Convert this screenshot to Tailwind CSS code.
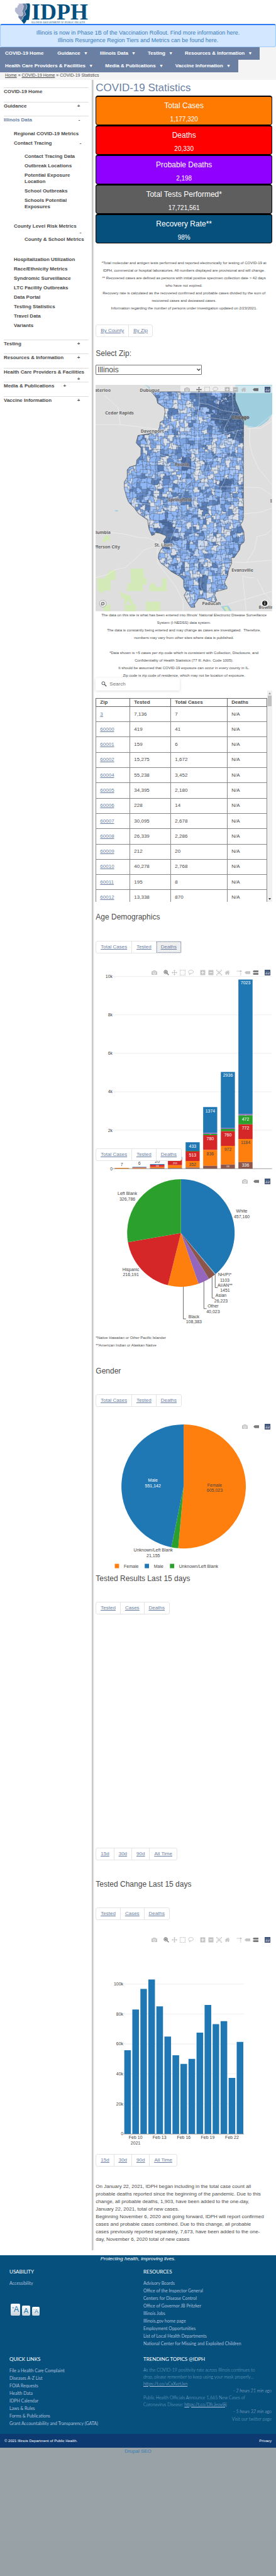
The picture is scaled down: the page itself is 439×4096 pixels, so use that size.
<!DOCTYPE html>
<html lang="en">
<head>
<meta charset="utf-8">
<meta name="viewport" content="width=device-width, initial-scale=1">
<title>COVID-19 Statistics | IDPH</title>
<script src="https://cdn.jsdelivr.net/npm/@tailwindcss/browser@4"></script>
</head>
<body class="min-h-screen flex flex-col bg-linear-to-b from-[#a5abad] to-[#97a1a6] font-['Liberation_Sans',Arial,sans-serif] text-[8px] leading-[12px] text-[#4a4a4a]">

<!-- Shared icons -->
<svg class="hidden" aria-hidden="true">
  <symbol id="camera" viewBox="0 0 1000 1000"><path transform="matrix(1 0 0 -1 0 850)" d="m500 450c-83 0-150-67-150-150 0-83 67-150 150-150 83 0 150 67 150 150 0 83-67 150-150 150z m400 150h-120c-16 0-34 13-39 29l-31 93c-6 15-23 28-40 28h-340c-16 0-34-13-39-28l-31-94c-6-15-23-28-40-28h-120c-55 0-100-45-100-100v-450c0-55 45-100 100-100h800c55 0 100 45 100 100v450c0 55-45 100-100 100z m-400-550c-138 0-250 112-250 250 0 138 112 250 250 250 138 0 250-112 250-250 0-138-112-250-250-250z m365 380c-19 0-35 16-35 35 0 19 16 35 35 35 19 0 35-16 35-35 0-19-16-35-35-35z"/></symbol>
  <symbol id="zoom" viewBox="0 0 24 24"><path fill-rule="evenodd" d="M9.500 1a8.500 8.500 0 1 0 4.800 15.500l6.700 6.500 2.500-2.500-6.600-6.500A8.500 8.500 0 0 0 9.500 1zm0 2.800a5.800 5.800 0 1 1 0 11.600 5.800 5.800 0 0 1 0-11.600zM5.500 6.500v6h8v-6z"/></symbol>
  <symbol id="pan" viewBox="0 0 1000 1000"><path transform="matrix(1 0 0 -1 0 850)" d="m1000 350l-187 188 0-125-250 0 0 250 125 0-188 187-187-187 125 0 0-250-250 0 0 125-188-188 186-187 0 125 252 0 0-250-125 0 187-188 188 188-125 0 0 250 250 0 0-126 187 188z"/></symbol>
  <symbol id="box" viewBox="0 0 24 24"><path d="M0 0h4v4H0zM6.500 0h4v3h-4zM13.500 0h4v3h-4zM20 0h4v4h-4zM0 6.500h3v4H0zM0 13.500h3v4H0zM21 6.500h3v4h-3zM21 13.500h3v4h-3zM0 20h4v4H0zM6.500 21h4v3h-4zM13.500 21h4v3h-4zM20 20h4v4h-4z"/></symbol>
  <symbol id="lasso" viewBox="0 0 24 24"><path fill="none" stroke="currentColor" stroke-width="2.600" d="M5 14.500C1.500 12 .8 7.500 4 4.500 8 1 17 .8 21 4.500c3.500 3.500 1.500 9-4 10.800-4 1.300-8 1-10-.3-2 1-2.500 4 0 4.200 2.500 0 3-3.200.5-3.700M7.500 19c0 2 -1 3-2.500 4"/></symbol>
  <symbol id="plus" viewBox="0 0 875 1000"><path transform="matrix(1 0 0 -1 0 850)" d="m1 787l0-875 875 0 0 875-875 0z m687-500l-187 0 0-187-125 0 0 187-188 0 0 125 188 0 0 187 125 0 0-187 187 0 0-125z"/></symbol>
  <symbol id="minus" viewBox="0 0 875 1000"><path transform="matrix(1 0 0 -1 0 850)" d="m0 788l0-876 875 0 0 876-875 0z m688-500l-500 0 0 125 500 0 0-125z"/></symbol>
  <symbol id="auto" viewBox="0 0 24 24"><path d="M0 0h6v2H2v4H0zM18 0h6v6h-2V2h-4zM0 18h2v4h4v2H0zM22 18h2v6h-6v-2h4zM4.500 4.500h6L8.600 6.400 12 9.800l3.400-3.400-1.900-1.900h6v6l-1.900-1.900L14.200 12l3.400 3.400 1.900-1.900v6h-6l1.900-1.900L12 14.200l-3.400 3.400 1.900 1.900h-6v-6l1.900 1.900L9.800 12 6.400 8.600l-1.900 1.900z"/></symbol>
  <symbol id="home" viewBox="0 0 929 1000"><path transform="matrix(1 0 0 -1 0 850)" d="m786 296v-267q0-15-11-26t-25-10h-214v214h-143v-214h-214q-15 0-25 10t-11 26v267q0 1 0 2t0 2l321 264 321-264q1-1 1-4z m124 39l-34-41q-5-5-12-6h-2q-7 0-12 3l-386 322-386-322q-7-4-13-4-7 2-12 7l-35 41q-4 5-3 13t6 12l401 334q18 15 42 15t43-15l136-114v109q0 8 5 13t13 5h107q8 0 13-5t5-13v-227l122-102q5-5 6-12t-4-13z"/></symbol>
  <symbol id="spike" viewBox="0 0 24 24"><path d="M2 4h4v3H2zM8 4h4v3H8zM16.500 13h3v4h-3zM16.500 19h3v4h-3z"/><circle cx="18" cy="6" r="4"/></symbol>
  <symbol id="tag" viewBox="0 0 1500 1000"><path transform="matrix(1 0 0 -1 0 850)" d="m375 725l0 0-375-375 375-374 0-1 1125 0 0 750-1125 0z"/></symbol>
  <symbol id="tags" viewBox="0 0 1125 1000"><path transform="matrix(1 0 0 -1 0 850)" d="m187 786l0 2-187-188 188-187 0 0 937 0 0 373-938 0z m0-499l0 1-187-188 188-188 0 0 937 0 0 376-938-1z"/></symbol>
  <symbol id="plotly" viewBox="0 0 24 24"><rect width="24" height="24" fill="#3f4f75"/><g fill="#80cfbe"><circle cx="5" cy="5" r="1.300"/><circle cx="9.500" cy="5" r="1.300"/><circle cx="14.500" cy="5" r="1.300"/><circle cx="19" cy="5" r="1.300"/><circle cx="5" cy="9.500" r="1.300"/><circle cx="14.500" cy="9.500" r="1.300"/></g><path fill="#fff" d="M4 13h2v7H4zM8.500 9h2v11h-2zM13.500 13h2v7h-2zM18 9h2v11h-2z"/></symbol>
</svg>

<div class="bg-white">
<header>
  <a href="#" aria-label="IDPH home" class="block h-[38px] pl-[23px] pt-[5px]">
    <svg class="h-[33px] w-[120px] overflow-visible" viewBox="0 0 120 33">
      <path fill="#06507d" d="M13 .5h11l.8 3-.6 14-1.200 9-4 0.500-1 3-3 3-4.500-6-3-4z"/>
      <path fill="#6c7fa3" stroke="#fff" stroke-width=".6" d="M10 .500h8l2 4-1 5-3 3 2 6-4 3-1 4-3 2-4-5 .5-6z"/>
      <path fill="#b5b9d2" stroke="#fff" stroke-width=".5" d="M6 .5h6l2.500 4-1 5-1.500 3 1.500 4-1 3.500-4 .5-5-3.500-3-4.500 .5-5 3.500-1 .5-3 2-1z"/>
      <text x="27" y="26" font-family="Liberation Serif" font-weight="bold" font-size="36" fill="#06507d">IDPH</text>
      <text x="27" y="32" font-family="Liberation Serif" font-size="5" fill="#06507d">I<tspan font-size="4">LLINOIS</tspan> D<tspan font-size="4">EPARTMENT OF</tspan> P<tspan font-size="4">UBLIC</tspan> H<tspan font-size="4">EALTH</tspan></text>
    </svg>
  </a>
  <div class="h-[37px] rounded-[3px] border border-[#9fcbfb] border-t-2 border-t-[#2b7bf5] bg-[#d3e7ff] pt-[6px] text-center text-[9px] text-[#3a7cb8]">
    <a href="#" class="block">Illinois is now in Phase 1B of the Vaccination Rollout. Find more information here.</a>
    <a href="#" class="block">Illinois Resurgence Region Tiers and Metrics can be found here.</a>
  </div>
  <div class="bg-[#f4f4f4]">
    <nav class="font-bold text-white">
      <ul class="flex h-[20px] w-fit items-center bg-[#6b7fa3] pl-[8px]">
        <li class="pr-[22px]"><a href="#">COVID-19 Home</a></li>
        <li class="pr-[19px]"><a href="#">Guidance <span class="ml-[3px] text-[7px]">▼</span></a></li>
        <li class="pr-[19px]"><a href="#">Illinois Data <span class="ml-[3px] text-[7px]">▼</span></a></li>
        <li class="pr-[19px]"><a href="#">Testing <span class="ml-[3px] text-[7px]">▼</span></a></li>
        <li class="pr-[12px]"><a href="#">Resources &amp; Information <span class="ml-[3px] text-[7px]">▼</span></a></li>
      </ul>
      <ul class="flex h-[20px] w-fit items-center bg-[#6b7fa3] pl-[8px]">
        <li class="pr-[19px]"><a href="#">Health Care Providers &amp; Facilities <span class="ml-[3px] text-[7px]">▼</span></a></li>
        <li class="pr-[19px]"><a href="#">Media &amp; Publications <span class="ml-[3px] text-[7px]">▼</span></a></li>
        <li class="pr-[12px]"><a href="#">Vaccine Information <span class="ml-[3px] text-[7px]">▼</span></a></li>
      </ul>
    </nav>
    <p class="h-[12px] pl-[8px] text-[7px] leading-[9px]"><a href="#" class="underline">Home</a> » <a href="#" class="underline">COVID-19 Home</a> » COVID-19 Statistics</p>
  </div>
</header>

<div class="flex">
  <aside class="w-1/3 shrink-0 pt-[12px] pr-[5px] pl-[6px] font-bold whitespace-nowrap">
    <ul>
      <li class="h-[23px] border-t border-[#ddd]"><a href="#">COVID-19 Home</a></li>
      <li class="flex h-[22px] justify-between border-t border-[#ddd] pr-[14px]"><a href="#">Guidance</a><button class="self-start font-bold" aria-label="Expand Guidance">+</button></li>
      <li class="border-t border-[#ddd]">
        <div class="flex justify-between pr-[14px]"><a href="#" class="text-[#6b7fa3]">Illinois Data</a><button class="font-bold" aria-label="Collapse Illinois Data">-</button></div>
        <ul class="mt-[11px] pl-[16px] leading-[10px]">
          <li class="mb-[5px]"><a href="#">Regional COVID-19 Metrics</a></li>
          <li>
            <div class="flex justify-between pr-[12px]"><a href="#">Contact Tracing</a><button class="font-bold" aria-label="Collapse Contact Tracing">-</button></div>
            <ul class="mt-[11px] flex flex-col gap-[5px] pl-[17px]">
              <li><a href="#">Contact Tracing Data</a></li>
              <li><a href="#">Outbreak Locations</a></li>
              <li><a href="#">Potential Exposure<br>Location</a></li>
              <li><a href="#">School Outbreaks</a></li>
              <li><a href="#">Schools Potential<br>Exposures</a></li>
            </ul>
          </li>
          <li class="mt-[21px]">
            <a href="#" class="block">County Level Risk Metrics</a>
            <div class="flex justify-end pr-[12px]"><button class="font-bold" aria-label="Collapse County Level Risk Metrics">-</button></div>
            <ul class="mt-[1px] pl-[17px]"><li><a href="#">County &amp; School Metrics</a></li></ul>
          </li>
          <li class="mt-[22px] mb-[17px]">
            <ul class="flex flex-col gap-[5px]">
              <li><a href="#">Hospitalization Utilization</a></li>
              <li><a href="#">Race/Ethnicity Metrics</a></li>
              <li><a href="#">Syndromic Surveillance</a></li>
              <li><a href="#">LTC Facility Outbreaks</a></li>
              <li><a href="#">Data Portal</a></li>
              <li><a href="#">Testing Statistics</a></li>
              <li><a href="#">Travel Data</a></li>
              <li><a href="#">Variants</a></li>
            </ul>
          </li>
        </ul>
      </li>
      <li class="flex h-[22px] justify-between border-t border-[#ddd] pr-[14px]"><a href="#">Testing</a><button class="self-start font-bold" aria-label="Expand Testing">+</button></li>
      <li class="flex h-[23px] justify-between border-t border-[#ddd] pr-[14px]"><a href="#">Resources &amp; Information</a><button class="self-start font-bold" aria-label="Expand Resources">+</button></li>
      <li class="h-[22px] border-t border-[#ddd]"><a href="#" class="block">Health Care Providers &amp; Facilities</a><div class="flex justify-end pr-[14px] leading-[10px]"><button class="font-bold" aria-label="Expand Health Care Providers">+</button></div></li>
      <li class="flex h-[23px] gap-[14px] border-t border-[#ddd]"><a href="#">Media &amp; Publications</a><button class="self-start font-bold" aria-label="Expand Media">+</button></li>
      <li class="flex h-[22px] justify-between border-t border-[#ddd] pr-[14px]"><a href="#">Vaccine Information</a><button class="self-start font-bold" aria-label="Expand Vaccine Information">+</button></li>
    </ul>
  </aside>
  <div class="w-[4px] shrink-0 bg-linear-to-r from-[#b5b5b5] to-white"></div>

  <main class="min-w-0 flex-1 pr-[6px] pb-[11px] pl-[2px]">
    <h1 class="mb-[2px] pt-[3px] text-[17px] leading-[20px] text-[#6b7fa3]">COVID-19 Statistics</h1>

    <section class="text-center text-white">
      <div class="rounded-[4px] border border-t-2 border-black bg-[#ff7a00] pt-[7px] pb-[2px]"><h3 class="text-[12px] leading-[15px]">Total Cases</h3><p class="mt-[7px] text-[10px] leading-[13px]">1,177,320</p></div>
      <div class="rounded-[4px] border border-t-2 border-black bg-[#ff0000] pt-[7px] pb-[2px]"><h3 class="text-[12px] leading-[15px]">Deaths</h3><p class="mt-[7px] text-[10px] leading-[13px]">20,330</p></div>
      <div class="rounded-[4px] border border-t-2 border-black bg-[#9000ff] pt-[7px] pb-[2px]"><h3 class="text-[12px] leading-[15px]">Probable Deaths</h3><p class="mt-[7px] text-[10px] leading-[13px]">2,198</p></div>
      <div class="rounded-[4px] border border-t-2 border-black bg-[#5e5e5e] pt-[7px] pb-[2px]"><h3 class="text-[12px] leading-[15px]">Total Tests Performed*</h3><p class="mt-[7px] text-[10px] leading-[13px]">17,721,561</p></div>
      <div class="rounded-[4px] border border-t-2 border-black bg-[#06507d] pt-[7px] pb-[2px]"><h3 class="text-[12px] leading-[15px]">Recovery Rate**</h3><p class="mt-[7px] text-[10px] leading-[13px]">98%</p></div>
    </section>

    <p class="mt-[25px] text-center text-[6px]">*Total molecular and antigen tests performed and reported electronically for testing of COVID-19 at<br>IDPH, commercial or hospital laboratories. All numbers displayed are provisional and will change.<br>** Recovered cases are defined as persons with initial positive specimen collection date &gt; 42 days<br>who have not expired.<br>Recovery rate is calculated as the recovered confirmed and probable cases divided by the sum of<br>recovered cases and deceased cases.<br>Information regarding the number of persons under investigation updated on 2/23/2021.</p>

    <div class="mt-[20px] flex w-fit divide-x divide-[#e4e4e4] rounded-[3px] border border-[#e4e4e4] leading-[10px] text-[#6b7fa3] underline">
      <a href="#" class="px-[7px] py-[4px]">By County</a><a href="#" class="px-[7px] py-[4px]">By Zip</a>
    </div>

    <label for="zip" class="mt-[18px] block text-[12px] leading-[16px]">Select Zip:</label>
    <div class="relative mt-[10px] w-3/5">
      <select id="zip" class="block h-[16px] w-full appearance-none rounded-[1px] border border-[#777] bg-white pl-[2px] text-[12px] leading-[14px]"><option>Illinois</option></select>
      <svg class="pointer-events-none absolute top-[6px] right-[2px] h-[4px] w-[6px]" viewBox="0 0 6 4"><path d="M.5.500 3 3 5.500.500" fill="none" stroke="#333" stroke-width="1.200"/></svg>
    </div>

    <!-- Choropleth of ZIP codes -->
    <div class="relative mt-[16px]">
      <svg class="block w-full" viewBox="0 0 280 359" role="img" aria-label="Illinois cases by ZIP">
        <defs>
          <path id="state" d="M530 163 548 178 575 205 583 235 610 248 638 262 645 290 638 320 635 342 605 355 600 385 590 405 545 425 500 430 440 437 420 440 404 487 445 520 443 568 410 595 405 628 350 640 330 658 330 705 306 735 306 775 325 830 343 865 390 900 420 933 500 977 512 1035 535 1075 558 1068 560 1055 600 1060 650 1075 655 1085 632 1110 640 1120 635 1135 610 1165 590 1195 588 1218 610 1250 655 1275 700 1305 770 1335 800 1358 800 1400 822 1430 803 1455 830 1495 860 1530 893 1530 890 1512 925 1475 960 1475 1020 1492 1060 1500 1075 1485 1058 1455 1065 1432 1160 1412 1160 1400 1145 1385 1140 1370 1165 1330 1175 1290 1188 1270 1200 1248 1195 1215 1220 1215 1265 1165 1272 1135 1300 1118 1305 1105 1300 1050 1272 1005 1290 985 1297 960 1297 350 1285 320 1265 285 1228 215 1228 162z"/>
          <clipPath id="il"><use href="#state" transform="scale(.1908 .25) translate(-67 -119)"/></clipPath>
        </defs>
        <rect width="280" height="359" fill="#dedede"/>
        <g transform="scale(.1908 .25) translate(-67 -119)">
          <path fill="#9fcede" d="M1228 119 1225 210 1262 280 1290 330 1300 370 1325 378 1330 386 1380 390 1440 378 1500 345 1540 300V119zM472 119l30 12 12 22 6 0-4-20-22-10zM222 917l20-4 18 4-18 6zM1110 1525l60-5 30 34h-60z"/>
          <path fill="#d4e9b8" d="M80 1346h60l45-50h48v60h-42v68h-50l-25 18-30-20zM355 1285h112v60h25v40h-30v42H325l12-50h28zM515 1390l30-18 30 30h45v-56h38v82H515zM120 1115l30-45 35 10 2 35-25-15-20 20zM265 1425l40 20 50 10 20 40 20 30-30-5-25-30-40 30 10-35-30-20zM485 1495h120v60H485zM310 1515h95v40h-95zM110 1512h80v43h-50zM1130 1530l30-4 20 28h-25z"/>
          <g fill="none" stroke="#fff" stroke-opacity=".75" stroke-width="2.500">
            <path d="M140 185 200 225 255 265 272 371M67 371h205l110 10 130 12 90 10M190 1056l120 10 110 20 90 5 130 50M67 1342l100-20 60-30 90-15 90-60 60-50 120-30M585 1100l-5 60 5 90 70 70 80 80 60 90v64M1300 768l140 4 100 50M1300 937l140-10 100-28M1350 395l-3 80 20 80 60 100 112 100M1200 1243l100 3 240-15M1290 1330l10 80 20 145M1320 1478l220-50M1320 1475l-150 35M1540 1030l-60 40-70 10-20 80-70 90M1330 395l110 0 100-50M1320 380l80 10 140-85M1410 1350l60 90 70 60M1290 1330l50 12h45"/>
          </g>
        </g>
        <g id="zips" clip-path="url(#il)" stroke="#46566f" stroke-width=".35" stroke-linejoin="round"></g>
        <g transform="scale(.1908 .25) translate(-67 -119)" fill="none">
          <use href="#state" stroke="#444" stroke-width="3"/>
          <path stroke="#fff" stroke-opacity=".7" stroke-width="2.500" d="M930 119v115l-15 90 5 360-100 70-50 110v110l-40 60-40 70M925 234l80 8 120 40 130 15 40 60M640 380l60-25 160-20 80-15 230 22M600 435l160 10 180 8 130-3 130-35 97-12M600 390v170l90 20 110 55 90 10 35 40 50 15 60 45 60 20h200M1200 119l12 170-72 100-10 120-60 50-60 50-30 60-60 20M1250 400l-50 110-20 80-40 140-30 40-8 150-50 110-60 60-60 40 5 110 10 60-5 100 60 105M700 1140l180 50 70 30 250 22M760 1105l180-60 180-50 120-45 57-12M340 863l200 15 90-5 140-15 160-30 100-60"/>
        </g>
        <g font-family="Noto Sans, Open Sans, sans-serif" font-weight="700" font-size="7" fill="#666" stroke="#e8e8e8" stroke-opacity=".8" stroke-width="1.500" paint-order="stroke" text-anchor="middle">
          <text x="24" y="11" text-anchor="end">Waterloo</text><text x="86" y="11">Dubuque</text><text x="38" y="47">Cedar Rapids</text><text x="90" y="76">Davenport</text><text x="230" y="54" fill="#555" stroke="#999">Chicago</text><text x="137" y="129" stroke="#aab">Peoria</text><text x="134" y="185" stroke="#aab">Springfield</text><text x="24" y="236" text-anchor="end">Columbia</text><text x="39" y="259" text-anchor="end">Jefferson City</text><text x="108" y="256">St. Louis</text><text x="233" y="296">Evansville</text><text x="184" y="349">Paducah</text><text x="259" y="355" text-anchor="start">Bowling Green</text><text x="277" y="187" text-anchor="start">Indianapolis</text>
        </g>
        <circle cx="11.500" cy="347" r="5.300" fill="#fff" stroke="#999" stroke-width=".8"/><path d="M8.500 347a3 3 0 1 1 3 3h-3z" fill="#888"/><path d="M11.500 345.500v3M10 347h3" stroke="#fff" stroke-width=".8"/>
        <circle cx="268.500" cy="346.500" r="6" fill="#eee"/><circle cx="268.500" cy="346.500" r="4" fill="#222"/><path d="M268.500 345.800v2.800M268.500 343.800v1" stroke="#fff" stroke-width="1.100"/>
      </svg>
      <div class="absolute top-[1px] right-0 flex h-[12px] items-center gap-[10px] bg-white/50 pr-[3px] pl-[6px] text-[#bbb]">
        <button aria-label="Download plot"><svg class="size-[9px] fill-current"><use href="#camera"/></svg></button>
        <span class="flex gap-[4px]"><button aria-label="Pan"><svg class="size-[9px] fill-[#6b6b6b]"><use href="#pan"/></svg></button><button aria-label="Box select"><svg class="size-[9px] fill-current"><use href="#box"/></svg></button><button aria-label="Lasso"><svg class="size-[9px] fill-current"><use href="#lasso"/></svg></button></span>
        <span class="flex gap-[4px]"><button aria-label="Zoom in"><svg class="size-[9px] fill-current"><use href="#plus"/></svg></button><button aria-label="Zoom out"><svg class="size-[9px] fill-current"><use href="#minus"/></svg></button><button aria-label="Reset view"><svg class="size-[9px] fill-current"><use href="#home"/></svg></button></span>
        <button aria-label="Toggle hover"><svg class="size-[9px] fill-[#6b6b6b]"><use href="#tag"/></svg></button>
        <button aria-label="Plotly"><svg class="size-[9px]"><use href="#plotly"/></svg></button>
      </div>
    </div>

    <p class="text-center text-[6px]">The data on this site is what has been entered into Illinois' National Electronic Disease Surveillance<br>System (I-NEDSS) data system.<br>The data is constantly being entered and may change as cases are investigated.&nbsp; Therefore,<br>numbers may vary from other sites where data is published.<br><br>*Data shown is &gt;5 cases per zip code which is consistent with Collection, Disclosure, and<br>Confidentiality of Health Statistics (77 Ill. Adm. Code 1005).<br>It should be assumed that COVID-19 exposure can occur in every county in IL.<br>Zip code is zip code of residence, which may not be location of exposure.</p>

    <div class="relative -mt-[2px] flex h-[20px] w-[134px] items-center gap-[4px] rounded-[2px] bg-white pl-[9px] shadow-[0_1px_4px_rgba(0,0,0,0.15)]">
      <svg class="size-[9px] shrink-0" viewBox="0 0 24 24"><circle cx="9" cy="9" r="6.500" fill="none" stroke="#444" stroke-width="2.500"/><path d="m14 14 8 8" stroke="#444" stroke-width="3"/></svg>
      <input type="search" aria-label="Search" placeholder="Search" class="w-full min-w-0 bg-transparent text-[8px] leading-[12px] placeholder:text-[#757575]">
    </div>

    <div class="flex h-[336px] overflow-hidden">
      <div class="min-w-0 flex-1 pt-[12px]">
        <table class="h-[330px] w-full table-fixed border-collapse text-left leading-[12px] [&_a]:text-[#6b7fa3] [&_a]:underline [&_td]:border [&_td]:border-[#888] [&_td]:p-0 [&_td]:pl-[6px] [&_th]:border [&_th]:border-[#666] [&_th]:p-0 [&_th]:pl-[6px]">
          <thead><tr><th class="w-[54px]">Zip</th><th class="w-[65px]">Tested</th><th class="w-[90px]">Total Cases</th><th>Deaths</th></tr></thead>
          <tbody>
            <tr><td><a href="#">3</a></td><td>7,136</td><td>7</td><td>N/A</td></tr>
            <tr><td><a href="#">60000</a></td><td>419</td><td>41</td><td>N/A</td></tr>
            <tr><td><a href="#">60001</a></td><td>159</td><td>6</td><td>N/A</td></tr>
            <tr><td><a href="#">60002</a></td><td>15,275</td><td>1,672</td><td>N/A</td></tr>
            <tr><td><a href="#">60004</a></td><td>55,238</td><td>3,452</td><td>N/A</td></tr>
            <tr><td><a href="#">60005</a></td><td>34,395</td><td>2,180</td><td>N/A</td></tr>
            <tr><td><a href="#">60006</a></td><td>228</td><td>14</td><td>N/A</td></tr>
            <tr><td><a href="#">60007</a></td><td>30,095</td><td>2,678</td><td>N/A</td></tr>
            <tr><td><a href="#">60008</a></td><td>26,339</td><td>2,286</td><td>N/A</td></tr>
            <tr><td><a href="#">60009</a></td><td>212</td><td>20</td><td>N/A</td></tr>
            <tr><td><a href="#">60010</a></td><td>40,278</td><td>2,768</td><td>N/A</td></tr>
            <tr><td><a href="#">60011</a></td><td>195</td><td>8</td><td>N/A</td></tr>
            <tr><td><a href="#">60012</a></td><td>13,338</td><td>870</td><td>N/A</td></tr>
          </tbody>
        </table>
      </div>
      <div class="flex w-[8px] shrink-0 flex-col items-center bg-[#f1f1f1] py-[3px]">
        <svg class="h-[3px] w-[4px]" viewBox="0 0 4 3"><path d="M0 3 2 0 4 3z" fill="#999"/></svg>
        <div class="mt-[2px] h-[17px] w-[6px] bg-[#c1c1c1]"></div>
        <svg class="mt-auto h-[3px] w-[4px]" viewBox="0 0 4 3"><path d="M0 0 2 3 4 0z" fill="#444"/></svg>
      </div>
    </div>

    <h2 class="mt-[16px] text-[12px] leading-[16px]">Age Demographics</h2>
    <div class="mt-[30px] flex w-fit divide-x divide-[#e4e4e4] rounded-[3px] border border-[#e4e4e4] leading-[10px] text-[#6b7fa3] underline">
      <a href="#" class="px-[7px] py-[4px]">Total Cases</a><a href="#" class="px-[7px] py-[4px]">Tested</a><a href="#" class="bg-[#eee] px-[7px] py-[4px] outline outline-dotted -outline-offset-1 outline-[#6b7fa3]">Deaths</a>
    </div>

    <!-- Deaths by age, stacked -->
    <div class="relative mt-[20px]">
      <svg class="block w-full" viewBox="0 0 280 325" font-family="Liberation Sans, Arial, sans-serif" font-size="7" fill="#444">
        <path d="M28 16.500h252M28 77.500h252M28 138.500h252M28 199.500h252M28 260.500h252" stroke="#eee" stroke-width="1"/>
        <g text-anchor="end"><text x="27" y="19">10k</text><text x="27" y="80">8k</text><text x="27" y="141">6k</text><text x="27" y="202">4k</text><text x="27" y="263">2k</text><text x="27" y="324">0</text></g>
        <g transform="translate(-13.200 -101.700) scale(.1908 .2714)">
          <path fill="#1f77b4" d="M375 1549h117v4H375zM522 1533h120v4H522zM671 1490h117v14H671zM818 1405h117v52H818zM964 1199h117v152H964zM1111 994h117v328h-117zM1257 454h118v786h-118z"/>
          <path fill="#9467bd" d="M964 1351h117v5H964zM1111 1322h117v5h-117zM1257 1240h118v8h-118z"/>
          <path fill="#2ca02c" d="M818 1455h117v4H818zM964 1356h117v8H964zM1111 1327h117v14h-117zM1257 1248h118v52h-118z"/>
          <path fill="#d62728" d="M375 1553h117v3H375zM522 1537h120v12H522zM671 1504h117v35H671zM818 1458h117v56H818zM964 1364h117v86H964zM1111 1341h117v85h-117zM1257 1300h118v86h-118z"/>
          <path fill="#ff7f0e" d="M229 1555h117v4H229zM375 1556h117v3H375zM522 1549h120v8H522zM671 1539h117v17H671zM818 1514h117v39H818zM964 1450h117v93H964zM1111 1426h117v109h-117zM1257 1386h118v135h-118z"/>
          <path fill="#8c564b" d="M522 1556h120v3H522zM671 1556h117v3H671zM818 1553h117v6H818zM964 1543h117v16H964zM1111 1535h117v24h-117zM1257 1521h118v38h-118z"/>
        </g>
        <path d="M28 321.500h252" stroke="#777" stroke-width=".7"/>
        <g text-anchor="middle">
          <text x="41.500" y="317">7</text><text x="69.500" y="315">6</text><text x="98" y="312">20</text>
          <text x="154" y="317">352</text><text x="182" y="300">836</text><text x="210" y="293">972</text><text x="238" y="282">1184</text>
          <g fill="#fff"><text x="154" y="288">433</text><text x="154" y="302">513</text><text x="182" y="232">1374</text><text x="182" y="276">780</text><text x="210" y="176">2936</text><text x="210" y="270">760</text><text x="238" y="29">7023</text><text x="238" y="245">472</text><text x="238" y="259">772</text><text x="238" y="318">336</text>
          <text x="98" y="318" font-size="3">106</text><text x="126" y="314" font-size="4">259</text><text x="210" y="319" font-size="3">202</text><text x="238" y="237.500" font-size="2">56</text><text x="182" y="267.500" font-size="2">62</text></g>
        </g>
      </svg>
      <div class="absolute top-[6px] right-[3px] flex gap-[10px] bg-white/70 text-[#c4c4c4]">
        <button aria-label="Download plot"><svg class="size-[9px] fill-current"><use href="#camera"/></svg></button>
        <span class="flex gap-[4px]"><button aria-label="Zoom"><svg class="size-[9px] fill-[#7b7b7b]"><use href="#zoom"/></svg></button><button aria-label="Pan"><svg class="size-[9px] fill-current"><use href="#pan"/></svg></button><button aria-label="Box select"><svg class="size-[9px] fill-current"><use href="#box"/></svg></button><button aria-label="Lasso"><svg class="size-[9px] fill-current"><use href="#lasso"/></svg></button></span>
        <span class="flex gap-[4px]"><button aria-label="Zoom in"><svg class="size-[9px] fill-current"><use href="#plus"/></svg></button><button aria-label="Zoom out"><svg class="size-[9px] fill-current"><use href="#minus"/></svg></button><button aria-label="Autoscale"><svg class="size-[9px] fill-current"><use href="#auto"/></svg></button><button aria-label="Reset axes"><svg class="size-[9px] fill-current"><use href="#home"/></svg></button></span>
        <span class="flex gap-[4px]"><button aria-label="Spike lines"><svg class="size-[9px] fill-current"><use href="#spike"/></svg></button><button aria-label="Closest"><svg class="size-[9px] fill-current"><use href="#tag"/></svg></button><button aria-label="Compare"><svg class="size-[9px] fill-[#7b7b7b]"><use href="#tags"/></svg></button></span>
        <button aria-label="Plotly"><svg class="size-[9px]"><use href="#plotly"/></svg></button>
      </div>
      <div class="absolute top-[290px] left-0 flex w-fit divide-x divide-[#e4e4e4] rounded-[3px] border border-[#e4e4e4] bg-white leading-[10px] text-[#6b7fa3] underline">
        <a href="#" class="px-[7px] py-[4px]">Total Cases</a><a href="#" class="px-[7px] py-[4px]">Tested</a><a href="#" class="px-[7px] py-[4px]">Deaths</a>
      </div>
    </div>

    <!-- Cases by race -->
    <div class="relative">
      <svg class="block w-full" viewBox="0 0 280 250" font-family="Liberation Sans, Arial, sans-serif" font-size="7" fill="#444" text-anchor="middle">
        <g transform="translate(135.400 98.300)">
          <path fill="#1f77b4" d="M0 0V-85.300A85.300 85.300 0 0 1 55.100 65.100z"/>
          <path fill="#7fb0d0" d="M0 0 55.100 65.100 54.200 65.900z"/>
          <path fill="#8c564b" d="M0 0 54.200 65.900A85.300 85.300 0 0 1 44.500 72.800z"/>
          <path fill="#9467bd" d="M0 0 44.500 72.800A85.300 85.300 0 0 1 28 80.600z"/>
          <path fill="#ff7f0e" d="M0 0 28 80.600A85.300 85.300 0 0 1-20.600 82.800z"/>
          <path fill="#d62728" d="M0 0-20.600 82.800A85.300 85.300 0 0 1-84 14.700z"/>
          <path fill="#2ca02c" d="M0 0-84 14.700A85.300 85.300 0 0 1 0-85.300z"/>
        </g>
        <path d="M139.300 183.500v51h4.200M171.900 175.600v42.700h4.200M184.900 168v33.600h4.200M189.800 163.700v21.300h4.200" fill="none" stroke="#444" stroke-width=".8"/>
        <text x="232" y="66">White</text><text x="232" y="74.500">457,160</text>
        <text x="50.500" y="38">Left Blank</text><text x="50.500" y="46.500">326,786</text>
        <text x="56" y="158.500">Hispanic</text><text x="56" y="167">216,191</text>
        <text x="205" y="166.500">NH/PI*</text><text x="205" y="175.500">1103</text>
        <text x="205.500" y="183.500">AI/AN**</text><text x="205.500" y="191.500">1451</text>
        <text x="199" y="199.500">Asian</text><text x="199" y="208.500">26,223</text>
        <text x="186.500" y="216.500">Other</text><text x="186.500" y="225">40,023</text>
        <text x="156" y="233">Black</text><text x="156" y="241.500">108,383</text>
      </svg>
      <div class="absolute top-[12px] right-[3px] flex gap-[9px] text-[#c4c4c4]">
        <button aria-label="Download plot"><svg class="size-[9px] fill-current"><use href="#camera"/></svg></button><button aria-label="Toggle hover"><svg class="size-[9px] fill-[#7b7b7b]"><use href="#tag"/></svg></button><button aria-label="Plotly"><svg class="size-[9px]"><use href="#plotly"/></svg></button>
      </div>
    </div>
    <p class="mt-[9px] text-[6px]">*Native Hawaiian or Other Pacific Islander<br>**American Indian or Alaskan Native</p>

    <h2 class="mt-[27px] text-[12px] leading-[16px]">Gender</h2>
    <div class="mt-[29px] flex w-fit divide-x divide-[#e4e4e4] rounded-[3px] border border-[#e4e4e4] leading-[10px] text-[#6b7fa3] underline">
      <a href="#" class="px-[7px] py-[4px]">Total Cases</a><a href="#" class="px-[7px] py-[4px]">Tested</a><a href="#" class="px-[7px] py-[4px]">Deaths</a>
    </div>
    <div class="relative mt-[20px]">
      <svg class="block w-full" viewBox="0 0 280 242" font-family="Liberation Sans, Arial, sans-serif" font-size="7" fill="#444">
        <g transform="translate(139.800 106.300)">
          <path fill="#ff7f0e" d="M0 0V-98.400A98.400 98.400 0 1 1-8.600 98z"/>
          <path fill="#2ca02c" d="M0 0-8.600 98A98.400 98.400 0 0 1-19.600 96.500z"/>
          <path fill="#1f77b4" d="M0 0-19.600 96.500A98.400 98.400 0 0 1 0-98.400z"/>
        </g>
        <g text-anchor="middle"><text x="91" y="99" fill="#fff">Male</text><text x="91" y="108" fill="#fff">551,142</text><text x="189" y="106.500">Female</text><text x="189" y="115">605,023</text><text x="91.500" y="209.500">Unknown/Left Blank</text><text x="91.500" y="218">21,155</text></g>
        <path fill="#ff7f0e" d="M30.500 229h6.800v7h-6.800z"/><path fill="#1f77b4" d="M78 229h6.800v7H78z"/><path fill="#2ca02c" d="M118 229h6.800v7H118z"/>
        <text x="45" y="235">Female</text><text x="92.500" y="235">Male</text><text x="132.500" y="235">Unknown/Left Blank</text>
      </svg>
      <div class="absolute top-[7px] right-[3px] flex gap-[9px] text-[#c4c4c4]">
        <button aria-label="Download plot"><svg class="size-[9px] fill-current"><use href="#camera"/></svg></button><button aria-label="Toggle hover"><svg class="size-[9px] fill-[#7b7b7b]"><use href="#tag"/></svg></button><button aria-label="Plotly"><svg class="size-[9px]"><use href="#plotly"/></svg></button>
      </div>
    </div>

    <h2 class="mt-[2px] text-[12px] leading-[16px]">Tested Results Last 15 days</h2>
    <div class="mt-[29px] flex w-fit divide-x divide-[#e4e4e4] rounded-[3px] border border-[#e4e4e4] leading-[10px] text-[#6b7fa3] underline">
      <a href="#" class="px-[7px] py-[4px]">Tested</a><a href="#" class="px-[7px] py-[4px]">Cases</a><a href="#" class="px-[7px] py-[4px]">Deaths</a>
    </div>
    <div class="mt-[371px] flex w-fit divide-x divide-[#e4e4e4] rounded-[3px] border border-[#e4e4e4] leading-[10px] text-[#6b7fa3] underline">
      <a href="#" class="px-[7px] py-[4px]">15d</a><a href="#" class="px-[7px] py-[4px]">30d</a><a href="#" class="px-[7px] py-[4px]">90d</a><a href="#" class="px-[7px] py-[4px]">All Time</a>
    </div>

    <h2 class="mt-[30px] text-[12px] leading-[16px]">Tested Change Last 15 days</h2>
    <div class="mt-[29px] flex w-fit divide-x divide-[#e4e4e4] rounded-[3px] border border-[#e4e4e4] leading-[10px] text-[#6b7fa3] underline">
      <a href="#" class="px-[7px] py-[4px]">Tested</a><a href="#" class="px-[7px] py-[4px]">Cases</a><a href="#" class="px-[7px] py-[4px]">Deaths</a>
    </div>
    <div class="relative mt-[20px]">
      <svg class="block w-full" viewBox="0 0 280 340" font-family="Liberation Sans, Arial, sans-serif" font-size="7" fill="#444">
        <path d="M44.500 81.500h191M44.500 129h191M44.500 176.500h191M44.500 224h191M44.500 271.500h191" stroke="#eee" stroke-width="1"/>
        <path transform="translate(-13.200 -150.300) scale(.1908 .3428)" fill="#1f77b4" d="M308 983h55v387h-55zM375 794h55v576h-55zM442 699h54v671h-54zM508 655h55v715h-55zM575 780h55v590h-55zM642 919h55v451h-55zM709 1006h55v364h-55zM775 1046h55v324h-55zM842 1023h55v347h-55zM909 901h55v469h-55zM976 773h55v597h-55zM1043 862h54v508h-54zM1109 848h55v522h-55zM1176 1111h55v259h-55zM1243 944h55v426h-55z"/>
        <path d="M44.500 319.500h191" stroke="#777" stroke-width=".7"/>
        <g text-anchor="end"><text x="44" y="84">100k</text><text x="44" y="131.500">80k</text><text x="44" y="179">60k</text><text x="44" y="226.500">40k</text><text x="44" y="274">20k</text><text x="44" y="321.500">0</text></g>
        <g text-anchor="middle"><text x="63.500" y="327">Feb 10</text><text x="63.500" y="336">2021</text><text x="101.500" y="327">Feb 13</text><text x="140" y="327">Feb 16</text><text x="178" y="327">Feb 19</text><text x="216.500" y="327">Feb 22</text></g>
      </svg>
      <div class="absolute top-[7px] right-[3px] flex gap-[10px] text-[#c4c4c4]">
        <button aria-label="Download plot"><svg class="size-[9px] fill-current"><use href="#camera"/></svg></button>
        <span class="flex gap-[4px]"><button aria-label="Zoom"><svg class="size-[9px] fill-[#7b7b7b]"><use href="#zoom"/></svg></button><button aria-label="Pan"><svg class="size-[9px] fill-current"><use href="#pan"/></svg></button><button aria-label="Box select"><svg class="size-[9px] fill-current"><use href="#box"/></svg></button><button aria-label="Lasso"><svg class="size-[9px] fill-current"><use href="#lasso"/></svg></button></span>
        <span class="flex gap-[4px]"><button aria-label="Zoom in"><svg class="size-[9px] fill-current"><use href="#plus"/></svg></button><button aria-label="Zoom out"><svg class="size-[9px] fill-current"><use href="#minus"/></svg></button><button aria-label="Autoscale"><svg class="size-[9px] fill-current"><use href="#auto"/></svg></button><button aria-label="Reset axes"><svg class="size-[9px] fill-current"><use href="#home"/></svg></button></span>
        <span class="flex gap-[4px]"><button aria-label="Spike lines"><svg class="size-[9px] fill-current"><use href="#spike"/></svg></button><button aria-label="Closest"><svg class="size-[9px] fill-current"><use href="#tag"/></svg></button><button aria-label="Compare"><svg class="size-[9px] fill-[#7b7b7b]"><use href="#tags"/></svg></button></span>
        <button aria-label="Plotly"><svg class="size-[9px]"><use href="#plotly"/></svg></button>
      </div>
    </div>
    <div class="mt-[11px] flex w-fit divide-x divide-[#e4e4e4] rounded-[3px] border border-[#e4e4e4] leading-[10px] text-[#6b7fa3] underline">
      <a href="#" class="px-[7px] py-[4px]">15d</a><a href="#" class="px-[7px] py-[4px]">30d</a><a href="#" class="px-[7px] py-[4px]">90d</a><a href="#" class="px-[7px] py-[4px]">All Time</a>
    </div>

    <p class="mt-[26px]">On January 22, 2021, IDPH began including in the total case count all<br>probable deaths reported since the beginning of the pandemic. Due to this<br>change, all probable deaths, 1,903, have been added to the one-day,<br>January 22, 2021, total of new cases.<br>Beginning November 6, 2020 and going forward, IDPH will report confirmed<br>cases and probable cases combined. Due to this change, all probable<br>cases previously reported separately, 7,673, have been added to the one-<br>day, November 6, 2020 total of new cases</p>
  </main>
</div>

<footer class="mt-[8px] bg-[#06507d] font-[Lato,sans-serif] text-[7px] text-[#a9bfdb]">
  <p class="text-center font-['Liberation_Sans',Arial,sans-serif] text-[8px] text-white italic">Protecting health, improving lives.</p>
  <div class="grid grid-cols-[213px_1fr] gap-y-[13px] pt-[8px] pr-[7px] pb-[11px] pl-[15px]">
    <section>
      <h4 class="mb-[6px] text-[8px] text-white">USABILITY</h4>
      <a href="#">Accessibility</a>
      <div class="mt-[27px] ml-[2px] flex items-end gap-[3px] font-['Liberation_Sans',Arial,sans-serif] text-[#1d78ad]">
        <button aria-label="Increase text size" class="relative h-[19px] w-[15px] rounded-[2px] bg-linear-to-b from-white to-[#c9d3da] pl-[3px] text-[12px] leading-[19px]">A<span class="absolute top-[2px] left-[2px] text-[6px] leading-[8px]">+</span></button>
        <button aria-label="Normal text size" class="h-[16px] w-[13px] rounded-[2px] bg-linear-to-b from-white to-[#c9d3da] text-[11px] leading-[16px]">A</button>
        <button aria-label="Decrease text size" class="relative h-[14px] w-[12px] rounded-[2px] bg-linear-to-b from-white to-[#c9d3da] pl-[2px] text-[9px] leading-[15px]">A<span class="absolute top-0 left-[2px] text-[6px] leading-[8px]">-</span></button>
      </div>
    </section>
    <section>
      <h4 class="mb-[6px] text-[8px] text-white">RESOURCES</h4>
      <ul><li><a href="#">Advisory Boards</a></li><li><a href="#">Office of the Inspector General</a></li><li><a href="#">Centers for Disease Control</a></li><li><a href="#">Office of Governor JB Pritzker</a></li><li><a href="#">Illinois Jobs</a></li><li><a href="#">Illinois.gov home page</a></li><li><a href="#">Employment Opportunities</a></li><li><a href="#">List of Local Health Departments</a></li><li><a href="#">National Center for Missing and Exploited Children</a></li></ul>
    </section>
    <section>
      <h4 class="mb-[6px] text-[8px] text-white">QUICK LINKS</h4>
      <ul><li><a href="#">File a Health Care Complaint</a></li><li><a href="#">Diseases A-Z List</a></li><li><a href="#">FOIA Requests</a></li><li><a href="#">Health Data</a></li><li><a href="#">IDPH Calendar</a></li><li><a href="#">Laws &amp; Rules</a></li><li><a href="#">Forms &amp; Publications</a></li><li><a href="#">Grant Accountability and Transparency (GATA)</a></li></ul>
    </section>
    <section class="font-light text-[#7fb0d0]">
      <h4 class="mb-[6px] text-[8px] font-normal text-white">TRENDING TOPICS @IDPH</h4>
      <div class="leading-[11px]">
        <p>As the COVID-19 positivity rate across Illinois continues to<br>drop, please remember to keep using your mask properly…<br><a href="#" class="text-[#a9bfdb] underline">https://t.co/vCxXvztJxn</a></p>
        <p class="text-right text-[#a9bfdb]">- <em>2 hours 21 min</em> ago</p>
        <p>Public Health Officials Announce 1,665 New Cases of<br>Coronavirus Disease: <a href="#" class="text-[#a9bfdb] underline">https://t.co/DfcJeovi8j</a></p>
        <p class="text-right text-[#a9bfdb]">- <em>5 hours 32 min</em> ago</p>
        <p class="text-right leading-[12px]"><a href="#">Visit our twitter page</a></p>
      </div>
    </section>
  </div>
  <div class="flex h-[22px] items-center justify-between bg-[#0d3a70] px-[7px] font-['Liberation_Sans',Arial,sans-serif] text-[6px] text-white"><span>© 2021 Illinois Department of Public Health.</span><a href="#">Privacy</a></div>
</footer>
</div>
<p class="text-center"><a href="#" class="text-[#3a7cb8]">Drupal SEO</a></p>

<script>
// Builds the ZIP-area mesh; every vertex and edge bend is hashed from its grid index, so neighbours share borders.
function hash(a, b, c) {
  let h = (a * 374761393 + b * 668265263 + c * 2147483647) | 0;
  h = Math.imul(h ^ (h >>> 13), 1274126177);
  return ((h ^ (h >>> 16)) >>> 0) / 4294967296;
}
const shades = ['#8fb6f5', '#8fb6f5', '#8fb6f5', '#8fb6f5', '#a8c6f5', '#7fa6e2', '#d9dfe8', '#d9dfe8', '#c4d5ef', '#8fb6f5', '#668dca', '#5a7fb8'];
const metros = [[225, 48, 45], [108, 240, 24], [170, 22, 20], [145, 122, 12], [140, 185, 10], [172, 315, 12], [205, 160, 10]];
function mesh(step, x0, y0, x1, y1, seed, inside) {
  const vertex = (i, j) => [x0 + (i + hash(i, j, seed) * .8 - .4) * step, y0 + (j + hash(i, j, seed + 1) * .8 - .4) * step];
  const edge = (i, j, k, l) => {
    const p = vertex(i, j), q = vertex(k, l), a = Math.min(i, k) * 2 + (i !== k ? 1 : 0), b = Math.min(j, l) * 2 + (j !== l ? 1 : 0);
    const dx = (hash(a, b, seed + 2) - .5) * step * .6, dy = (hash(a, b, seed + 3) - .5) * step * .6;
    const mx = (p[0] + q[0]) / 2 + dx, my = (p[1] + q[1]) / 2 + dy;
    const bend = i !== k ? [[mx, p[1]], [mx, my], [mx, q[1]]] : [[p[0], my], [mx, my], [q[0], my]];
    return [p, ...bend, q];
  };
  let out = '';
  for (let j = 0; y0 + j * step < y1; j++) for (let i = 0; x0 + i * step < x1; i++) {
    const cx = x0 + (i + .5) * step, cy = y0 + (j + .5) * step;
    if (inside && !inside(cx, cy)) continue;
    const pts = [...edge(i, j, i + 1, j), ...edge(i + 1, j, i + 1, j + 1), ...edge(i + 1, j + 1, i, j + 1), ...edge(i, j + 1, i, j)];
    const near = Math.max(...metros.map(m => 1 - Math.hypot(cx - m[0], cy - m[1]) / m[2]));
    const r = hash(i, j, seed + 9);
    const fill = near > 0 && r < near * 1.6 + .25 ? (r < .3 ? '#4a6ca3' : '#5a7fb8') : shades[Math.floor(hash(i, j, seed + 5) * shades.length)];
    out += '<path fill="' + fill + '" d="M' + pts.map(p => p[0].toFixed(1) + ' ' + p[1].toFixed(1)).join('L') + 'z"/>';
  }
  return out;
}
document.getElementById('zips').innerHTML =
  mesh(7, 38, 3, 244, 360, 11) +
  mesh(3, 190, 9, 240, 84, 47, (x, y) => Math.hypot(x - 228, y - 45) < 36);
</script>
</body>
</html>
